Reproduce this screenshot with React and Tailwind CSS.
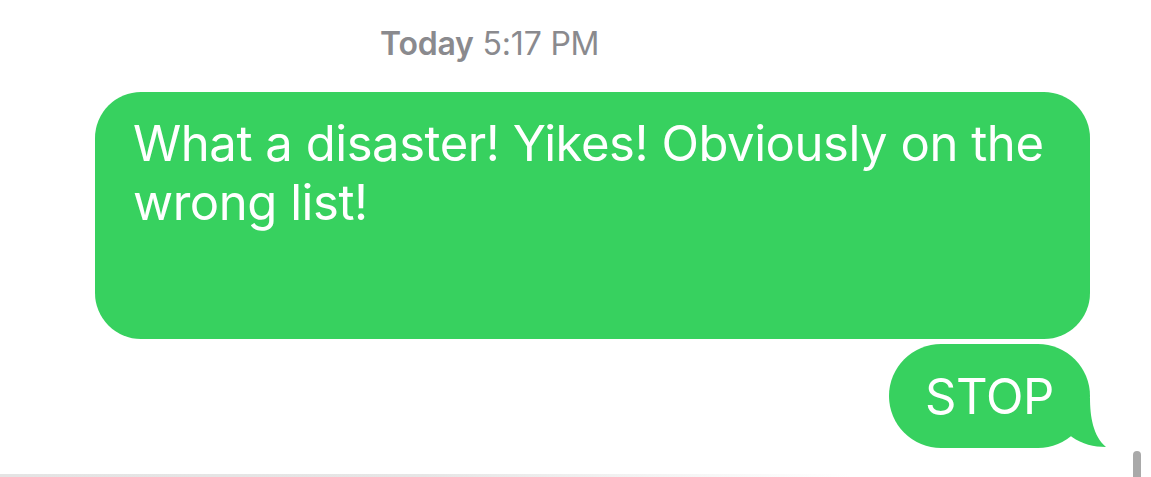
import React from 'react';

const GREEN = 'bg-[#37d15f]';

// little tail under the last bubble in a group
const Tail = () => (
  <svg
    className="absolute right-[-16px] bottom-0"
    width="40"
    height="50"
    viewBox="0 0 40 50"
  >
    <path
      d="M0 0 L24 0 C24 18 27 38 40 49 C28 49 16 46 6 39 C4 37 0 36 0 36 Z"
      fill="#37d15f"
    />
  </svg>
);

const Bubble = ({ children, tail, className }) => (
  <div className={`relative ${GREEN} text-white ${className}`}>
    {children}
    {tail && <Tail />}
  </div>
);

export default function App() {
  return (
    <div
      className="relative w-[1151px] h-[477px] overflow-hidden bg-white"
      style={{ fontFamily: 'Inter, Roboto, "Liberation Sans", sans-serif' }}
    >
      {/* Timestamp */}
      <div className="pt-[22px] pl-[380px] text-[32px] leading-[44px] text-[#8a8a8e] tracking-[-0.2px]">
        <span className="font-semibold">Today</span>{' '}
        <span className="font-normal">5:17 PM</span>
      </div>

      {/* Messages */}
      <div className="flex flex-col items-end pr-[61px] mt-[26px] gap-[5px]">
        <Bubble className="w-[995px] h-[247px] rounded-[46px] pl-[38px] pr-[30px] pt-[22px]">
          <p className="text-[49px] leading-[59px] tracking-[-0.45px]">
            What a disaster! Yikes! Obviously on the wrong list!
          </p>
        </Bubble>
        <Bubble tail className="h-[104px] w-[201px] rounded-[52px] justify-center flex items-center">
          <p className="text-[49px] leading-[59px] tracking-[-0.3px]">STOP</p>
        </Bubble>
      </div>

      {/* bottom divider */}
      <div className="absolute left-0 bottom-0 w-[850px] h-[3px] bg-gradient-to-r from-[#e4e4e4] via-[#e6e6e6] to-transparent" />

      {/* scroll indicator */}
      <div className="absolute left-[1133px] top-[451px] w-[8px] h-[40px] rounded-full bg-[#a9a9a9]" />
    </div>
  );
}
